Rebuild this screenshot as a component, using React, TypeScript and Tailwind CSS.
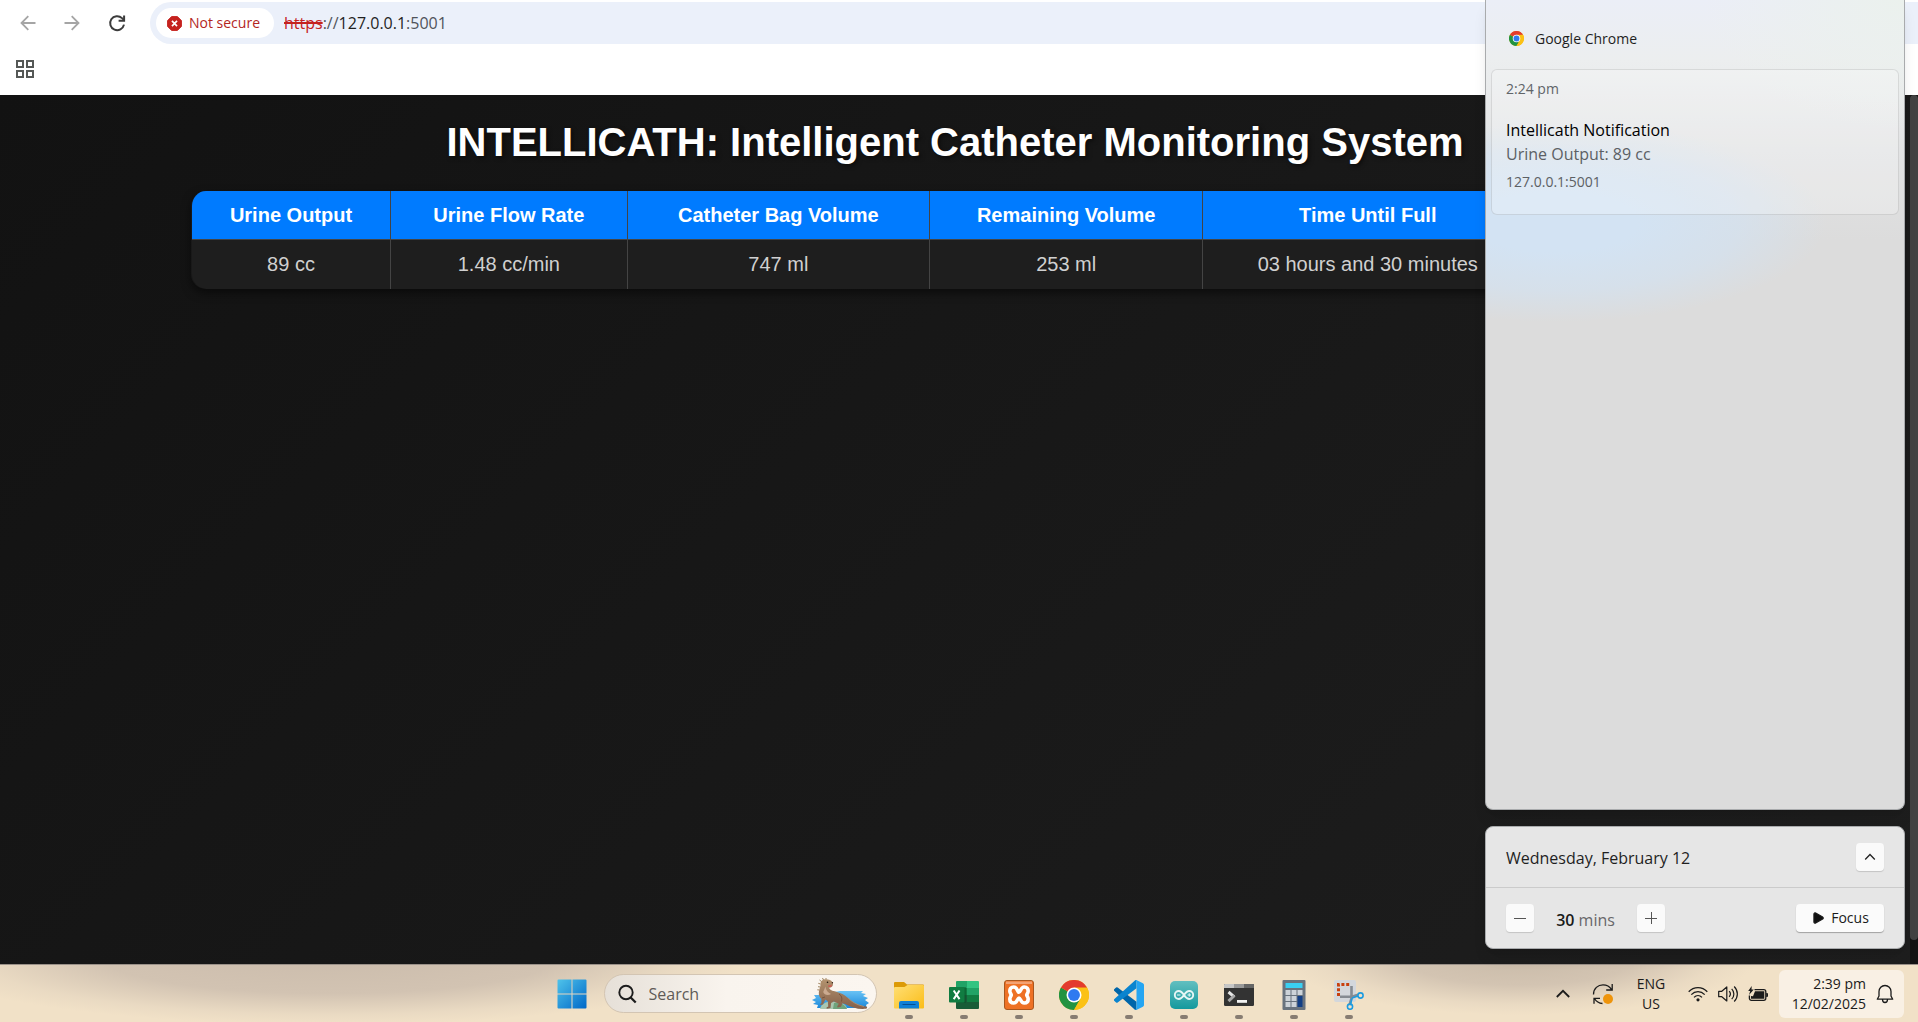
import React from "react";
import { Play } from "lucide-react";

const columns = [
  { label: "Urine Output", value: "89 cc", width: "w-[13%]" },
  { label: "Urine Flow Rate", value: "1.48 cc/min", width: "w-[15.5%]" },
  { label: "Catheter Bag Volume", value: "747 ml", width: "w-[19.8%]" },
  { label: "Remaining Volume", value: "253 ml", width: "w-[17.9%]" },
  { label: "Time Until Full", value: "03 hours and 30 minutes", width: "w-[21.6%]" },
];

function ArrowLeft({ flip = false }: { flip?: boolean }) {
  return (
    <svg viewBox="0 0 16 16" className={flip ? "size-4 rotate-180" : "size-4"} fill="none" stroke="#a5a5a5" strokeWidth="1.8" aria-hidden="true">
      <path d="M15.5 8H1.6M8.3 1.2 1.5 8l6.8 6.8" />
    </svg>
  );
}

function BrowserBar() {
  return (
    <header className="flex h-[95px] shrink-0 flex-col bg-white">
      <div className="flex h-[46px] items-center pl-5">
        <button type="button" aria-label="Back" className="mr-7">
          <ArrowLeft />
        </button>
        <button type="button" aria-label="Forward" className="mr-7">
          <ArrowLeft flip />
        </button>
        <button type="button" aria-label="Reload">
          <svg viewBox="0 0 18 18" className="size-[18px]" fill="none" stroke="#3c3c3c" strokeWidth="2" aria-hidden="true">
            <path d="M16 10.6A7 7 0 1 1 14 4.1l1.8 1.8" />
            <path d="M16.1 1.4v5.4h-5.5" />
          </svg>
        </button>
        <div className="ml-6 flex h-[42px] flex-1 items-center rounded-l-full bg-[#ebf0fa] pl-1.5">
          <button type="button" className="flex h-[30px] items-center gap-[7px] rounded-full bg-white pr-3.5 pl-[11px] text-sm font-medium text-[#b3261e]">
            <svg viewBox="0 0 16 16" className="size-[15px]" aria-hidden="true">
              <path d="M4.9.6h6.2l4.3 4.3v6.2l-4.3 4.3H4.9L.6 11.1V4.9z" fill="#c5221f" stroke="#c5221f" strokeLinejoin="round" />
              <path d="m5.3 5.3 5.4 5.4m0-5.4-5.4 5.4" stroke="#fff" strokeWidth="1.8" />
            </svg>
            Not secure
          </button>
          <a href="#page" className="ml-2.5 text-base text-[#50545a]">
            <span className="text-[#c5221f] line-through decoration-2">https</span>://<span className="text-[#1f1f1f]">127.0.0.1</span>:5001
          </a>
        </div>
      </div>
      <div className="flex flex-1 items-center pb-1 pl-4">
        <button type="button" aria-label="Apps">
          <svg viewBox="0 0 18 18" className="size-[18px]" fill="none" stroke="#555856" strokeWidth="2" aria-hidden="true">
            <path d="M1 1h6v6H1zM11 1h6v6h-6zM1 11h6v6H1zM11 11h6v6h-6z" />
          </svg>
        </button>
      </div>
    </header>
  );
}

function Dashboard() {
  return (
    <div className="flex flex-1 bg-[linear-gradient(135deg,#121212,#1e1e1e)]">
      <main id="page" className="flex-1 pt-[23px] font-['Liberation_Sans',Arial,sans-serif]">
        <h1 className="mb-[25px] text-center text-[40px] leading-[48px] font-bold text-white [text-shadow:2px_2px_4px_rgba(0,0,0,0.5)]">
          INTELLICATH: Intelligent Catheter Monitoring System
        </h1>
        <div className="mx-auto w-4/5 overflow-hidden rounded-[15px] border-l border-[#191919] bg-[#1e1e1e] shadow-[0_4px_10px_rgba(0,0,0,0.5)]">
          <table className="w-full table-fixed text-center text-xl leading-6">
            <thead className="bg-[#007bff] text-white">
              <tr className="h-12">
                {columns.map((c) => (
                  <th key={c.label} scope="col" className={`${c.width} border-r border-b border-[#444] font-bold`}>
                    {c.label}
                  </th>
                ))}
                <td className="border-b border-[#444]" />
              </tr>
            </thead>
            <tbody className="text-[#d0d0d0]">
              <tr className="h-[50px]">
                {columns.map((c) => (
                  <td key={c.label} className="border-r border-[#444]">
                    {c.value}
                  </td>
                ))}
                <td />
              </tr>
            </tbody>
          </table>
        </div>
      </main>
      <div className="w-2 bg-[#121212] pb-6">
        <div className="h-full rounded-full bg-[#424242]" />
      </div>
    </div>
  );
}

function ChromeLogo({ className }: { className: string }) {
  return (
    <svg viewBox="0 0 48 48" className={className} aria-hidden="true">
      <circle cx="24" cy="24" r="24" fill="#fbbc0a" />
      <path d="M3.2 12A24 24 0 0 0 24 48l10.4-18z" fill="#229342" />
      <path d="M24 12h20.8A24 24 0 0 1 24 48l10.4-18z" fill="#fbc116" />
      <path d="M24 24 3.2 12A24 24 0 0 1 44.8 12H24z" fill="#e33b2e" />
      <circle cx="24" cy="24" r="12" fill="#fff" />
      <circle cx="24" cy="24" r="9.5" fill="#2f7af0" />
    </svg>
  );
}

function NotificationCenter() {
  const square = "flex size-7 items-center justify-center rounded bg-[#fafafa] shadow-[0_1px_1px_rgba(0,0,0,0.15)]";
  return (
    <aside className="absolute top-0 right-[13px] bottom-[73px] flex w-[420px] flex-col gap-4">
      <section className="flex-1 rounded-b-lg border border-t-0 border-[#a9abad] bg-[#dcdcdc] bg-[radial-gradient(ellipse_270px_100px_at_70px_222px,#d3e3f3_30%,#d3e2f1b0_68%,#d3e3f300_100%),radial-gradient(ellipse_200px_130px_at_100%_0,#ebf1ed,#ebf1ed00),linear-gradient(#ebeef7,#eceeef_60px,#e2e3e4_150px,#dcdcdc_240px)] px-[5px] shadow-lg">
        <h2 className="flex h-[69px] items-center gap-[11px] pt-2 pl-[18px] text-sm text-[#1f1f1f]">
          <ChromeLogo className="size-[15px]" />
          Google Chrome
        </h2>
        <article className="h-[146px] rounded-md border border-black/10 bg-white/25 px-3.5 pt-[9px]">
          <time className="block text-sm text-[#606468]">2:24 pm</time>
          <h3 className="mt-[19px] text-base leading-6 text-black">Intellicath Notification</h3>
          <p className="text-base leading-6 text-[#5c6064]">Urine Output: 89 cc</p>
          <p className="mt-1.5 text-sm leading-5 text-[#5c6064]">127.0.0.1:5001</p>
        </article>
      </section>
      <section className="rounded-lg border border-[#a9abad] bg-[#e6e6e6] shadow-lg">
        <div className="flex h-[61px] items-center justify-between border-b border-[#cbcbcb] px-5">
          <h2 className="pt-0.5 text-base text-[#1f1f1f]">Wednesday, February 12</h2>
          <button type="button" aria-label="Expand calendar" className={square}>
            <svg viewBox="0 0 12 12" className="size-3" fill="none" stroke="#222" strokeWidth="1.3" aria-hidden="true">
              <path d="m1.2 8.5 4.8-5 4.8 5" />
            </svg>
          </button>
        </div>
        <div className="flex h-[60px] items-center px-5">
          <button type="button" aria-label="Decrease minutes" className={square}>
            <svg viewBox="0 0 12 12" className="size-3" stroke="#555" aria-hidden="true">
              <path d="M0 6.5h12" />
            </svg>
          </button>
          <p className="w-[103px] pt-1 text-center text-base text-[#68686a]">
            <span className="font-semibold text-[#1a1a1a]">30</span> mins
          </p>
          <button type="button" aria-label="Increase minutes" className={square}>
            <svg viewBox="0 0 12 12" className="size-3" stroke="#555" aria-hidden="true">
              <path d="M0 6.5h12M6.5 0v12" />
            </svg>
          </button>
          <button type="button" className="ml-auto flex h-7 w-[88px] items-center justify-center gap-1.5 rounded bg-[#fbfbfb] text-sm text-[#1a1a1a] shadow-[0_1px_1px_rgba(0,0,0,0.3)]">
            <Play className="size-3.5 fill-[#111]" aria-hidden="true" />
            Focus
          </button>
        </div>
      </section>
    </aside>
  );
}

function StartIcon() {
  return (
    <svg viewBox="0 0 30 30" className="size-[30px]" aria-hidden="true">
      <defs>
        <linearGradient id="start" x1="0" y1="0" x2="1" y2="1">
          <stop stopColor="#4fc3ea" />
          <stop offset="1" stopColor="#0068c8" />
        </linearGradient>
      </defs>
      <path d="M1.5.5H14.5V14.500H.5V1.500a1 1 0 0 1 1-1zM15.500.5h13a1 1 0 0 1 1 1V14.500h-14zM.5 15.500H14.500v14H1.500a1 1 0 0 1-1-1zM15.500 15.500h14v13a1 1 0 0 1-1 1h-13z" fill="url(#start)" />
    </svg>
  );
}

function Otter() {
  return (
    <svg viewBox="0 0 58 32" className="h-8 w-[58px]" aria-hidden="true">
      <defs>
        <linearGradient id="fur" x1="0" y1="0" x2="0" y2="1">
          <stop stopColor="#b3936f" />
          <stop offset="1" stopColor="#86604a" />
        </linearGradient>
        <linearGradient id="sea" x1="0" y1="0" x2="0" y2="1">
          <stop stopColor="#69c3f5" />
          <stop offset="1" stopColor="#1b88da" />
        </linearGradient>
      </defs>
      <path d="M2 17h4l22-4h23l-2 2 5 1-3 2 5 2-3 2 4 3-3 2 1 3H5l1-3-5-1 3-2-4-2 4-2z" fill="url(#sea)" />
      <path d="M8 31c1-5 5-7.500 13-7.500s14 3 14 7.500z" fill="#a9c6b0" />
      <path d="M22 25c7-1 11 2 13 6H21z" fill="#6fa37c" />
      <path d="M8.500 6C8.500 2.500 11 1 14.500 1.200c4 .2 6.500 2.300 6.500 5 0 2.300-1.600 3.300-3.800 3.500.6 2.600 3 2.800 7 4 5.500 1.500 8.600 3.300 11.800 6.300 4.500 4 9.500 7.500 18 8.600 1.500.3 1.500 2 0 2.200-8 .8-15-1.600-20.500-4.600l-3-.9-1.500 3.400-3.500.8-.3-1.300 1.600-2.400-5-2.400-2.700 1.500-.6 5-3.800.8-.2-1.200 1.700-1-.3-5-2.500-2-1.400 2.700-1 2.300-2.800.6.200-1.200 1-.8 0-4C6.600 18.500 6.400 15 7.200 12 8 9.500 8.500 8.500 8.500 6z" fill="url(#fur)" />
      <path d="M13.500 8.500c.5 4 2.500 6 5.500 7.500-3 1.800-6.800 1-7.800-2z" fill="#cbaa90" />
      <path d="M27 16c2.500 1.500 3.500 4 2.500 7.500M10 20l3-1" stroke="#704c38" strokeWidth=".8" fill="none" />
      <path d="m9.500 3.500-2-1.500M11.500 2l-1-2M14 1.300 14-.2M8.500 6 6.300 5.300M8.200 9 6 8.700M7.300 12l-2-.2" stroke="#a08460" fill="none" />
      <path d="M36 20c4 4 9 7 16 8.500" stroke="#b3906f" strokeWidth=".8" fill="none" />
      <circle cx="15.500" cy="4.300" r=".8" fill="#20140c" />
      <path d="M16 7.200c1.500.6 2.800.3 3.800-.7l-.5 2.200-2.600.4z" fill="#d5534f" />
      <circle cx="20.400" cy="4.800" r=".7" fill="#2c1c14" />
    </svg>
  );
}

const apps: { name: string; icon: React.ReactNode }[] = [
  {
    name: "File Explorer",
    icon: (
      <svg viewBox="0 0 30 30" className="size-[30px]" aria-hidden="true">
        <defs>
          <linearGradient id="folder" x1="0" y1="0" x2="1" y2="1">
            <stop stopColor="#ffdf75" />
            <stop offset="1" stopColor="#fbbd18" />
          </linearGradient>
        </defs>
        <path d="M0 3a1 1 0 0 1 1-1h9l3 2.500h16a1 1 0 0 1 1 1V12H0z" fill="#dc9a06" />
        <path d="M0 8a1 1 0 0 1 1-1h9.500l3-2H29a1 1 0 0 1 1 1v21.500a1 1 0 0 1-1 1H1a1 1 0 0 1-1-1z" fill="url(#folder)" />
        <path d="M5 28.500v-5.500a2 2 0 0 1 2-2h16a2 2 0 0 1 2 2v5.500z" fill="#1080d6" />
        <path d="M8.500 24.500h13" stroke="#064f92" />
      </svg>
    ),
  },
  {
    name: "Excel",
    icon: (
      <svg viewBox="0 0 30 30" className="size-[30px]" aria-hidden="true">
        <path d="M8 1h11v7H7V2a1 1 0 0 1 1-1z" fill="#21a366" />
        <path d="M18 1h11a1 1 0 0 1 1 1v6H18z" fill="#33c481" />
        <path d="M7 8h11v7H7z" fill="#107c41" />
        <path d="M18 8h12v7H18z" fill="#21a366" />
        <path d="M18 15h12v7H18z" fill="#107c41" />
        <path d="M7 15h11v7h12v6a1 1 0 0 1-1 1H8a1 1 0 0 1-1-1z" fill="#185c37" />
        <path d="M9 7h8v16H9z" fill="#0b4d2a" opacity=".45" />
        <rect y="7" width="15.500" height="15.500" rx="1" fill="#107c41" />
        <path d="m4.700 10.500 5.800 8.600M10.500 10.500l-5.800 8.600" stroke="#fff" strokeWidth="2" />
      </svg>
    ),
  },
  {
    name: "XAMPP",
    icon: (
      <svg viewBox="0 0 30 30" className="size-[30px]" aria-hidden="true">
        <rect x=".5" y=".5" width="29" height="29" rx="2.500" fill="#ee7125" stroke="#a8561f" />
        <path d="M2 1.500h26v2.500H2z" fill="#f3a273" />
        <path
          d="M15 12.300C13.500 12.300 13.300 7 9.800 7 7 7 5.800 9 5.800 11c0 2 1.500 3 1.500 4s-1.500 2-1.500 4c0 2.200 1.200 4 4 4 3.500 0 3.700-5 5.200-5s1.700 5 5.200 5c2.800 0 4-1.800 4-4 0-2-1.500-3-1.500-4s1.500-2 1.500-4c0-2-1.200-4-4-4-3.500 0-3.700 5.300-5.200 5.300z"
          fill="none"
          stroke="#fff"
          strokeWidth="3.600"
          strokeLinejoin="round"
        />
      </svg>
    ),
  },
  { name: "Google Chrome", icon: <ChromeLogo className="size-[30px]" /> },
  {
    name: "Visual Studio Code",
    icon: (
      <svg viewBox="0 0 24 24" className="size-[30px]" aria-hidden="true">
        <path d="M.33 7.260 1.650 6.060a1 1 0 0 1 1.280-.06L18 17.450v6.400a1.500 1.500 0 0 1-1.500-.35L.33 8.740a1 1 0 0 1 0-1.480z" fill="#0065a9" />
        <path d="M.33 16.740 1.650 17.940a1 1 0 0 0 1.280.06L18 6.550V.15a1.500 1.500 0 0 0-1.500.35L.33 15.260a1 1 0 0 0 0 1.480z" fill="#0a84cf" />
        <path d="M16.500 23.500c.5.5 1.150.6 1.710.29l4.940-2.380A1.500 1.500 0 0 0 24 20.060V3.940a1.500 1.500 0 0 0-.85-1.350L18.210.21c-.56-.3-1.210-.21-1.710.29.900-.5 1.500 0 1.500.9v21.200c0 .9-.6 1.400-1.500.9z" fill="#25a5f2" />
      </svg>
    ),
  },
  {
    name: "Arduino IDE",
    icon: (
      <svg viewBox="0 0 30 30" className="size-[30px]" aria-hidden="true">
        <defs>
          <linearGradient id="teal" x1="0" y1="0" x2="0" y2="1">
            <stop stopColor="#62bfc0" />
            <stop offset="1" stopColor="#15999d" />
          </linearGradient>
        </defs>
        <rect x="1" y="1" width="28" height="28" rx="5" fill="url(#teal)" />
        <path d="M15 15c-1.800-2.700-3-4-5.200-4a4 4 0 0 0 0 8c2.200 0 3.400-1.300 5.200-4s3-4 5.200-4a4 4 0 0 1 0 8c-2.200 0-3.400-1.300-5.200-4z" fill="none" stroke="#e6f6f5" strokeWidth="1.900" />
        <path d="M8 15h3.500M18.500 15H22M20.250 13.300v3.400" stroke="#e6f6f5" />
      </svg>
    ),
  },
  {
    name: "Terminal",
    icon: (
      <svg viewBox="0 0 30 30" className="size-[30px]" aria-hidden="true">
        <rect y="4" width="30" height="22" rx="1.200" fill="#333" />
        <path d="M0 8V5a1 1 0 0 1 1-1h9v4z" fill="#c6c6c6" />
        <path d="M10 4h10v4H10z" fill="#999" />
        <path d="M20 4h9a1 1 0 0 1 1 1v3H20z" fill="#666" />
        <path d="m4.500 12 5.700 4.800" stroke="#e5e5e5" strokeWidth="3" />
        <path d="m10.500 15.500-6 5.700" stroke="#a7a7a7" strokeWidth="3" />
        <path d="M13 20h10v2.800H13z" fill="#f2f2f2" />
      </svg>
    ),
  },
  {
    name: "Calculator",
    icon: (
      <svg viewBox="0 0 30 30" className="size-[30px]" aria-hidden="true">
        <rect x="3.500" width="23" height="30" rx="1" fill="#69737e" />
        <path d="M6.500 3h17v5h-17z" fill="#3ad0f3" />
        <path d="M6.500 10h5v5h-5zM12.500 10h5v5h-5zM18.500 10h5v5h-5zM6.500 16h5v5h-5zM12.500 16h5v5h-5zM6.500 22h5v5h-5zM12.500 22h5v5h-5z" fill="#cdd3d9" />
        <path d="M18.500 16h5v11h-5z" fill="#123f86" />
      </svg>
    ),
  },
  {
    name: "Snipping Tool",
    icon: (
      <svg viewBox="0 0 30 30" className="size-[30px]" aria-hidden="true">
        <rect width="22" height="22" rx="2" fill="#d3d7dc" />
        <path d="M4.500 16V4.500H16" fill="none" stroke="#c8400f" strokeWidth="3" strokeDasharray="3 1.800" />
        <path d="M17.500 6v12.500L15.500 25M6 16.700h12l6-2" fill="none" stroke="#858b92" strokeWidth="2.600" />
        <circle cx="26.500" cy="15.500" r="2.600" fill="none" stroke="#1c9be0" strokeWidth="1.600" />
        <circle cx="16" cy="26.700" r="2.600" fill="none" stroke="#1c9be0" strokeWidth="1.600" />
        <path d="m18 18 6-2M17.700 18.500l-1 5.500" stroke="#1c9be0" strokeWidth="1.600" />
      </svg>
    ),
  },
];

function Taskbar() {
  return (
    <footer className="grid h-[58px] shrink-0 grid-cols-[1fr_auto_1fr] border-t border-[#9a9189] bg-[#f1e1c7] bg-[radial-gradient(ellipse_420px_70px_at_330px_-10px,#cbbcac_0%,#d2c3b2_55%,#e2d3be80_85%,#e8d8c200_100%),radial-gradient(ellipse_240px_60px_at_1520px_-10px,#c8baa8_0%,#d3c4b2_50%,#e2d3be80_82%,#e8d8c200_100%)]">
      <nav aria-label="Taskbar" className="col-start-2 ml-0.5 flex items-center gap-[17px]">
        <button type="button" aria-label="Start">
          <StartIcon />
        </button>
        <label className="flex h-[39px] w-[273px] items-center rounded-full border border-[#d3c5b3] bg-[linear-gradient(90deg,#e6e0d8,#f9f4ee_45%,#fbf6f0)] pr-1.5 pl-3">
          <svg viewBox="0 0 20 20" className="size-5 shrink-0" fill="none" stroke="#1c1c1c" strokeWidth="1.900" aria-hidden="true">
            <circle cx="9" cy="8.500" r="6.700" />
            <path d="m13.700 13.500 5 5" strokeWidth="2.300" />
          </svg>
          <input type="search" aria-label="Search" placeholder="Search" className="ml-3 min-w-0 flex-1 bg-transparent text-base outline-none placeholder:text-[#5f5b57]" />
          <Otter />
        </label>
        <ul className="flex h-full items-end gap-[25px] pb-[3px]">
          {apps.map((app) => (
            <li key={app.name}>
              <button type="button" aria-label={app.name} className="flex flex-col items-center gap-[5px]">
                {app.icon}
                <span className="h-1 w-2 rounded-full bg-[#877c72]" />
              </button>
            </li>
          ))}
        </ul>
      </nav>
      <div className="flex items-center justify-end pr-3.5 text-[#1b1b1b]">
        <button type="button" aria-label="Show hidden icons" className="mr-[22px]">
          <svg viewBox="0 0 14 14" className="size-3.5" fill="none" stroke="currentColor" strokeWidth="1.800" aria-hidden="true">
            <path d="m.8 10 6.200-6.200L13.200 10" />
          </svg>
        </button>
        <button type="button" aria-label="Windows Update" className="mr-[22px]">
          <svg viewBox="0 0 22 22" className="size-[22px]" fill="none" stroke="currentColor" strokeWidth="1.300" aria-hidden="true">
            <path d="M1.500 11.500C1.500 5.500 6 1.800 11 1.800c3.800 0 6.700 1.700 8.500 4.700M20.200 1v6h-6M10.500 20.500c-3.500-.2-6.200-1.800-8-5M8 15.300H2v5.500" />
            <circle cx="16" cy="16" r="5" fill="#ee940c" stroke="none" />
          </svg>
        </button>
        <button type="button" aria-label="Input language" className="mr-[22px] w-[30px] text-center text-sm leading-5">
          ENG
          <br />
          US
        </button>
        <button type="button" aria-label="Quick settings" className="mr-[11px] flex items-center gap-2.5">
          <svg viewBox="0 0 20 16" className="h-4 w-5" fill="none" stroke="currentColor" strokeWidth="1.300" aria-hidden="true">
            <path d="M.7 5.700c5.200-5.400 13.400-5.400 18.600 0M3.300 8.600c3.800-3.900 9.600-3.900 13.400 0M6 11.400c2.300-2.300 5.700-2.300 8 0" />
            <circle cx="10" cy="13.800" r="1.600" fill="currentColor" stroke="none" />
          </svg>
          <svg viewBox="0 0 20 18" className="h-[18px] w-5" fill="none" stroke="currentColor" strokeWidth="1.200" strokeLinejoin="round" aria-hidden="true">
            <path d="M.7 6.300h3.100L8.800 2v14l-5-4.300H.7z" />
            <path d="M11.200 6.200c1.500 1.700 1.500 3.900 0 5.600M13.700 3.800c2.900 3 2.900 7.400 0 10.400M16.200 1.500c4.200 4.300 4.200 10.700 0 15" />
          </svg>
          <svg viewBox="0 0 20 16" className="h-4 w-5" aria-hidden="true">
            <path d="M6.500 3.700h9.300a2 2 0 0 1 2 2v6.600a2 2 0 0 1-2 2H3.400a2 2 0 0 1-2-2V9.500" fill="none" stroke="currentColor" strokeWidth="1.300" />
            <path d="M7 5.300h9.300v7.400H3V10l2 .2zM18.200 7h.8a1 1 0 0 1 1 1v2a1 1 0 0 1-1 1h-.8zM3.700 0 .2 5h2L1 9l4.800-5.400H3.500z" fill="currentColor" />
          </svg>
        </button>
        <button type="button" aria-label="Clock and notifications" className="flex h-12 w-[125px] items-center justify-end gap-2.5 rounded-md bg-[#f9f0e4] pr-2.5 text-sm leading-5">
          <span className="text-right">
            2:39 pm
            <br />
            12/02/2025
          </span>
          <svg viewBox="0 0 18 20" className="h-5 w-[18px]" fill="none" stroke="currentColor" strokeWidth="1.300" strokeLinejoin="round" aria-hidden="true">
            <path d="M9 1.500c3.400 0 6 2.600 6 6V12l1.700 3.200H1.300L3 12V7.500c0-3.400 2.600-6 6-6zM6.500 15.500c0 1.800 1 3 2.500 3s2.500-1.200 2.500-3" />
          </svg>
        </button>
      </div>
    </footer>
  );
}

export default function App() {
  return (
    <div className="relative flex min-h-screen flex-col overflow-hidden font-['Open_Sans','Noto_Sans',sans-serif]">
      <BrowserBar />
      <Dashboard />
      <NotificationCenter />
      <Taskbar />
    </div>
  );
}
